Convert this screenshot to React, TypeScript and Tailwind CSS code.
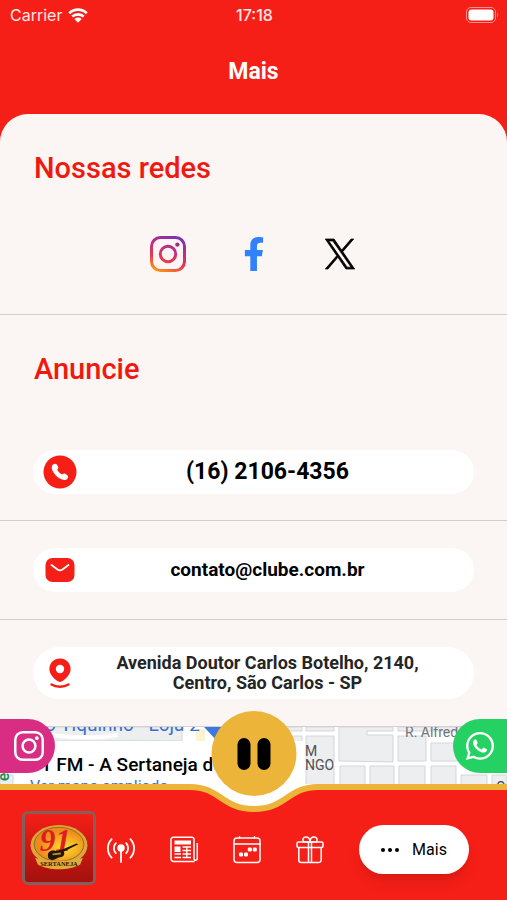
import type { ReactNode } from 'react';
import { FaFacebookF, FaWhatsapp } from 'react-icons/fa';

interface ContactRowProps {
  href: string;
  icon: ReactNode;
  children: ReactNode;
  className?: string;
}

const InstagramGlyph = ({ className, stroke }: { className: string; stroke: string }) => (
  <svg viewBox="0 0 36 36" fill="none" className={className} aria-hidden="true">
    <defs>
      <linearGradient id="insta" x1="8" y1="36" x2="22" y2="0" gradientUnits="userSpaceOnUse">
        <stop offset="0" stopColor="#fb9a13" />
        <stop offset="0.35" stopColor="#e5394f" />
        <stop offset="0.65" stopColor="#c32d80" />
        <stop offset="1" stopColor="#7b34ac" />
      </linearGradient>
    </defs>
    <rect x="1.5" y="1.5" width="33" height="33" rx="9" stroke={stroke} strokeWidth="3" />
    <circle cx="18" cy="18" r="7.7" stroke={stroke} strokeWidth="3" />
    <circle cx="27.4" cy="8.6" r="2.2" fill={stroke} />
  </svg>
);

const XLogo = () => (
  <svg viewBox="0 0 24 24" className="h-[30px] w-[30px] overflow-visible" aria-hidden="true">
    <path
      d="M14.23 10.16 22.98 0h-2.07l-7.6 8.82L7.24 0H.24l9.17 13.34L.24 24h2.07l8.02-9.32L16.74 24h7l-9.51-13.84zm-2.84 3.3-.93-1.33L3.06 1.56h3.18l5.97 8.53.93 1.33 7.76 11.1h-3.18l-6.33-9.06z"
      stroke="#000"
      strokeWidth="0.6"
    />
  </svg>
);

const PhoneIcon = () => (
  <svg viewBox="0 0 34 34" className="h-[34px] w-[34px]" aria-hidden="true">
    <circle cx="17" cy="17" r="16.5" fill="#f51f17" />
    <path
      d="M10.2 9.3c1.3-1 3-.8 3.8.5l1.1 1.9c.5.9.2 1.7-.4 2.3-.6.5-.4 1 0 1.6.9 1.6 2 2.6 3.5 3.4.6.4 1.2.4 1.7-.1.6-.6 1.4-.7 2.2-.2l2 1.3c1.2.8 1.3 2.2.4 3.4-1.4 1.8-3.6 1.9-6 .9-4.3-1.8-7.6-5-9.2-9-.9-2.3-.8-4.7.9-6z"
      fill="#fff"
    />
  </svg>
);

const MailIcon = () => (
  <svg viewBox="0 0 34 34" className="h-[34px] w-[34px]" aria-hidden="true">
    <rect x="2.5" y="5" width="29" height="24" rx="7" fill="#f51f17" />
    <path d="M8.5 12l6 4.500c1.500 1.100 3.500 1.100 5 0L25.500 12" fill="none" stroke="#fff" strokeWidth="1.8" strokeLinecap="round" />
  </svg>
);

const PinIcon = () => (
  <svg viewBox="0 0 34 34" className="h-[34px] w-[34px]" aria-hidden="true">
    <path
      fillRule="evenodd"
      d="M17 2.500c6 0 10.600 4.600 10.600 10.500 0 4.600-3.200 8.400-7.600 11.800-1.900 1.500-4.100 1.500-6 0C9.600 21.400 6.400 17.600 6.400 13 6.400 7.100 11 2.500 17 2.500zm0 6.300a4.200 4.200 0 1 0 0 8.400 4.200 4.200 0 0 0 0-8.400z"
      fill="#f51f17"
    />
    <path d="M8.500 28.500c4.500 3 12.500 3 17 0" fill="none" stroke="#f51f17" strokeWidth="2.4" strokeLinecap="round" />
  </svg>
);

const AntennaIcon = () => (
  <svg viewBox="0 0 28 28" fill="none" stroke="#fff" strokeWidth="1.8" strokeLinecap="round" className="h-7 w-7" aria-hidden="true">
    <circle cx="14" cy="12" r="2.8" fill="#fff" />
    <path d="M14 13v13" />
    <path d="M8.800 7.200a7.500 7.500 0 0 0 0 10M19.200 7.200a7.500 7.500 0 0 1 0 10M4.600 3.200a13.500 13.500 0 0 0 0 18.500M23.400 3.200a13.500 13.500 0 0 1 0 18.500" />
  </svg>
);

const NewsIcon = () => (
  <svg viewBox="0 0 28 28" fill="none" stroke="#fff" strokeWidth="1.5" strokeLinejoin="round" className="h-7 w-7" aria-hidden="true">
    <path d="M24.500 25.500H4A3 3 0 0 1 1 22.500V3.500A2.200 2.200 0 0 1 3.200 1.300h18.600A2.200 2.200 0 0 1 24 3.500V23a1.700 1.700 0 0 0 3.300 0V7" />
    <rect x="4.5" y="4.5" width="16.5" height="4" fill="#fff" stroke="none" />
    <rect x="4.5" y="10.5" width="6" height="5.5" fill="#fff" stroke="none" />
    <path d="M12.500 11h8.500M12.500 14.500h8.500M4.500 18h6.500M12.500 18h8.500M4.500 21.500h6.500M12.500 21.500h8.500M16.800 10.500v11" strokeWidth="1.4" />
  </svg>
);

const CalendarIcon = () => (
  <svg viewBox="0 0 28 28" fill="none" stroke="#fff" strokeWidth="1.5" strokeLinecap="round" className="h-7 w-7" aria-hidden="true">
    <rect x="1" y="2" width="26" height="24.5" rx="3" />
    <path d="M1 8h26M6.500.8V2M21.500.8V2" />
    <g fill="#fff" stroke="none">
      <rect x="6" y="16.5" width="4" height="4" rx="1.3" />
      <rect x="11" y="16.5" width="4" height="4" rx="1.3" />
      <rect x="14.8" y="11.5" width="4" height="4" rx="1.3" />
      <rect x="19.8" y="11.5" width="4" height="4" rx="1.3" />
    </g>
  </svg>
);

const GiftIcon = () => (
  <svg viewBox="0 0 28 28" fill="none" stroke="#fff" strokeWidth="1.5" strokeLinejoin="round" className="h-7 w-7" aria-hidden="true">
    <rect x="1" y="6" width="26" height="5.5" rx="1.5" />
    <path d="M2.800 11.500V24a2.500 2.500 0 0 0 2.500 2.500h17.400a2.500 2.500 0 0 0 2.500-2.500V11.500M12.500 6v20.500M15.500 6v20.500" />
    <path d="M12.500 6H7.500C6 3 7.500 1 9.800 1c2.500 0 4.200 2 4.200 5 0-3 1.700-5 4.200-5 2.300 0 3.800 2 2.300 5h-5" />
  </svg>
);

const StationLogo = () => (
  <svg viewBox="0 0 74 74" className="h-full w-full" aria-hidden="true">
    <defs>
      <linearGradient id="plate" x1="0" y1="0" x2="0" y2="1">
        <stop offset="0" stopColor="#f51f17" />
        <stop offset="0.5" stopColor="#cc1712" />
        <stop offset="1" stopColor="#a3110e" />
      </linearGradient>
      <radialGradient id="sun" cx="0.6" cy="0.6">
        <stop offset="0" stopColor="#ffe02e" />
        <stop offset="1" stopColor="#ee8a1c" />
      </radialGradient>
    </defs>
    <rect width="74" height="74" fill="url(#plate)" />
    <ellipse cx="37" cy="34" rx="31" ry="22" fill="#dba63a" />
    <ellipse cx="37" cy="33" rx="27" ry="18.5" fill="url(#sun)" stroke="#8d6a1f" strokeWidth="1" />
    <text x="33" y="40" textAnchor="middle" fontFamily="Liberation Serif, serif" fontSize="34" fontStyle="italic" fontWeight="700" fill="#e01c22">91</text>
    <path d="M25 46c-1-5 4-7 8-6 3 1 4-2 7-1l16-7 2 1-16 8c2 2 0 6-4 6-3 0-5 3-8 3s-5-1-5-4z" fill="#24140e" />
    <path d="M30 44l9-1" stroke="#b98a2c" strokeWidth="2" />
    <path d="M11 48q26 7 52 0l-3 7c-12 7-34 7-46 0z" fill="#e0ac39" />
    <text x="37" y="57" textAnchor="middle" fontFamily="Liberation Serif, serif" fontSize="7" fontWeight="700" fill="#2a1607">SERTANEJA</text>
  </svg>
);

// Street blocks behind the place card
const MapBlocks = () => (
  <svg viewBox="0 0 507 60" preserveAspectRatio="xMidYMin slice" className="h-full w-full" aria-hidden="true">
    <rect width="507" height="60" fill="#fff" />
    <g fill="#eceef0" stroke="#d3d6da" strokeWidth="1">
      <path d="M0 0h182v14H0z" />
      <path d="M0 48h13v12H0z" />
      <path d="M288 0h14v4h-14zM306 0h28v4h-28zM290 9h12v6h-12zM306 9h28v26h-28zM306 40h28v22h-28z" />
      <path d="M339 0h54v4h-26v4h26v27l-54-1z" />
      <path d="M398 0h109v4H398zM398 9h28v25h-28zM431 16h28v18h-28z" />
      <path d="M340 39h25v22h-25zM370 39h24v22h-24zM399 39h26v22h-26zM431 39h25v22h-25zM461 48h26v14h-26zM492 48h15v14h-15z" />
    </g>
    <path d="M88 15q30-4 87-1v2z" fill="#cfe6d6" />
    <path d="M52 8q35 5 66 0" fill="none" stroke="#fff" strokeWidth="4" />
    <path d="M196 2h9v12h-9z" fill="#fbf3d2" />
    <path d="M204 0h28v30z" fill="#3b78e0" />
  </svg>
);

function ContactRow({ href, icon, children, className = 'h-[44px]' }: ContactRowProps) {
  return (
    <a href={href} className={`mx-[33px] flex items-center rounded-full bg-white pr-4 pl-[10px] ${className}`}>
      {icon}
      <span className="flex-1 text-center font-bold">{children}</span>
    </a>
  );
}

export default function App() {
  const navItems = [
    { label: 'Ao vivo', icon: <AntennaIcon /> },
    { label: 'Notícias', icon: <NewsIcon /> },
    { label: 'Programação', icon: <CalendarIcon /> },
    { label: 'Promoções', icon: <GiftIcon /> },
  ];

  return (
    <div className="flex min-h-screen flex-col bg-[#f51f17] font-['Roboto',sans-serif] text-black">
      {/* Status bar */}
      <div className="grid h-[30px] grid-cols-3 items-center pr-2 pl-[10px] font-['Inter',sans-serif] text-base text-white/90">
        <div className="flex items-center gap-1.5">
          <span>Carrier</span>
          <svg viewBox="0 0 20 15" className="h-[15px] w-5" aria-hidden="true">
            <path d="M1.200 5.200a12.700 12.700 0 0 1 17.600 0M4.200 8.600a8.400 8.400 0 0 1 11.600 0" fill="none" stroke="#fff" strokeWidth="2.7" />
            <path d="M10 14.800l-3.700-3.900a5.400 5.400 0 0 1 7.400 0z" fill="#fff" />
          </svg>
        </div>
        <span className="text-center font-medium">17:18</span>
        <svg viewBox="0 0 33 16" className="h-4 w-[33px] justify-self-end" aria-hidden="true">
          <rect x="0.5" y="0.5" width="29" height="15" rx="4.5" fill="none" stroke="#fff" strokeOpacity="0.5" />
          <rect x="2.5" y="2.5" width="25" height="11" rx="3" fill="#fff" />
          <path d="M31 5.500v5q2-2.500 0-5z" fill="#fff" fillOpacity="0.5" />
        </svg>
      </div>

      <header className="flex h-[84px] items-center justify-center">
        <h1 className="text-[23px] leading-7 font-bold text-white">Mais</h1>
      </header>

      <main className="flex flex-1 flex-col rounded-t-[28px] bg-[#fbf5f4]">
        <section className="h-[201px] border-b border-[#d3cecd] pt-[38px]">
          <h2 className="px-[34px] text-[29px] leading-8 font-medium text-[#f0190f]">Nossas redes</h2>
          <div className="mt-[52px] flex items-center justify-center gap-[50px]">
            <a href="#instagram" aria-label="Instagram" className="flex w-9 justify-center">
              <InstagramGlyph className="h-9 w-9" stroke="url(#insta)" />
            </a>
            <a href="#facebook" aria-label="Facebook" className="flex w-9 justify-center">
              <FaFacebookF className="h-[34px] w-[34px] text-[#3182fa]" />
            </a>
            <a href="#x" aria-label="X" className="flex w-9 justify-center">
              <XLogo />
            </a>
          </div>
        </section>

        <section>
          <h2 className="px-[34px] pt-[38px] text-[29px] leading-8 font-medium text-[#f0190f]">Anuncie</h2>
          <div className="border-b border-[#d3cecd] pt-[65px] pb-[26px]">
            <ContactRow href="tel:+551621064356" icon={<PhoneIcon />}>
              <span className="text-[23px]">(16) 2106-4356</span>
            </ContactRow>
          </div>
          <div className="border-b border-[#d3cecd] py-[27px]">
            <ContactRow href="mailto:contato@clube.com.br" icon={<MailIcon />}>
              <span className="text-[19px]">contato@clube.com.br</span>
            </ContactRow>
          </div>
          <div className="py-[27px]">
            <ContactRow href="#mapa" icon={<PinIcon />} className="h-[52px]">
              <span className="block text-lg leading-5 text-[#252525]">
                Avenida Doutor Carlos Botelho, 2140,
                <br />
                Centro, São Carlos - SP
              </span>
            </ContactRow>
          </div>
        </section>

        {/* Map preview */}
        <div className="relative flex-1">
          <div className="absolute inset-0 overflow-hidden border-t border-[#d3d0cf] bg-white">
            <MapBlocks />
            <span className="absolute -top-[16px] left-[45px] text-[19px] leading-7 whitespace-nowrap text-[#3a70cf]">o Tiquinho - Loja 2</span>
            <span className="absolute -top-[5px] left-[405px] text-sm leading-5 whitespace-nowrap text-[#70757a]">R. Alfredo</span>
            <div className="absolute top-[17px] left-[305px] text-sm leading-[14px] text-[#4d5156]">
              <p>M</p>
              <p>NGO</p>
            </div>
            <span className="absolute top-[40px] left-0 -rotate-90 text-base leading-5 font-medium text-[#218a4f]">e</span>
            <span className="absolute top-[52px] left-[496px] text-sm leading-4 text-[#444]">O</span>
            <div className="absolute top-[14px] left-[14px] h-[60px] w-[290px] bg-white pt-[12px] pl-[16px]">
              <p className="text-[19px] leading-6 font-medium whitespace-nowrap">91 FM - A Sertaneja do...</p>
              <a href="#mapa" className="block text-base leading-5 text-[#3b70d6]">Ver mapa ampliado</a>
            </div>
          </div>
          <a href="#instagram" aria-label="Instagram" className="absolute -top-[7px] left-0 flex h-[54px] w-[55px] items-center rounded-r-full bg-[#d92d84] pl-[14px]">
            <InstagramGlyph className="h-[30px] w-[30px]" stroke="#fff" />
          </a>
          <a href="#whatsapp" aria-label="WhatsApp" className="absolute -top-[7px] right-0 flex h-[54px] w-[54px] items-center rounded-l-full bg-[#25d163] pl-[11px]">
            <FaWhatsapp className="h-8 w-8 text-white" />
          </a>
        </div>
      </main>

      <footer className="relative flex h-[116px] items-center border-t-[6px] border-[#ecb539] bg-[#f51f17] pt-[6px] pr-[38px] pl-[22px]">
        <svg viewBox="0 0 140 32" className="absolute -top-[6px] left-1/2 h-8 w-[140px] -translate-x-1/2" aria-hidden="true">
          <path d="M0 0V3H6C36 3 38 25 70 25S104 3 134 3h6V0z" fill="#fff" />
          <path d="M0 3H6C36 3 38 25 70 25S104 3 134 3h6" fill="none" stroke="#ecb539" strokeWidth="6" />
        </svg>
        <button type="button" aria-label="Pausar" className="absolute -top-[79px] left-1/2 flex h-[85px] w-[85px] -translate-x-1/2 items-center justify-center gap-[7px] rounded-full bg-[#ecb539]">
          <span className="h-8 w-[13px] rounded-full bg-black" />
          <span className="h-8 w-[13px] rounded-full bg-black" />
        </button>
        <button type="button" aria-label="91 FM Sertaneja" className="mr-[11px] h-[74px] w-[74px] overflow-hidden rounded-md border-[3px] border-[#83605c]">
          <StationLogo />
        </button>
        <nav className="flex flex-1 items-center justify-between pt-[3px]">
          {navItems.map((item) => (
            <button key={item.label} type="button" aria-label={item.label}>
              {item.icon}
            </button>
          ))}
          <button type="button" className="flex h-[49px] w-[110px] items-center justify-center gap-[13px] rounded-full bg-white text-base shadow-lg">
            <svg viewBox="0 0 18 4" className="h-1 w-[18px]" aria-hidden="true">
              <circle cx="2" cy="2" r="2" />
              <circle cx="9" cy="2" r="2" />
              <circle cx="16" cy="2" r="2" />
            </svg>
            Mais
          </button>
        </nav>
      </footer>
    </div>
  );
}
